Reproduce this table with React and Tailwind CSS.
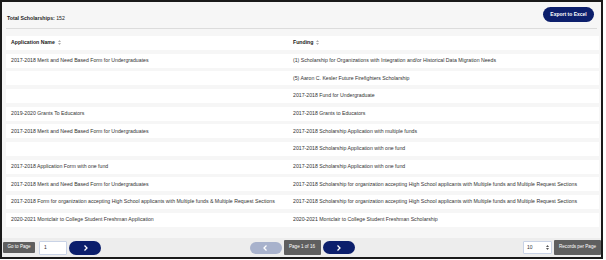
import React from "react";

const rows = [
  ["2017-2018 Merit and Need Based Form for Undergraduates", "(1) Scholarship for Organizations with Integration and/or Historical Data Migration Needs"],
  ["", "(5) Aaron C. Kesler Future Firefighters Scholarship"],
  ["", "2017-2018 Fund for Undergraduate"],
  ["2019-2020 Grants To Educators", "2017-2018 Grants to Educators"],
  ["2017-2018 Merit and Need Based Form for Undergraduates", "2017-2018 Scholarship Application with multiple funds"],
  ["", "2017-2018 Scholarship Application with one fund"],
  ["2017-2018 Application Form with one fund", "2017-2018 Scholarship Application with one fund"],
  ["2017-2018 Merit and Need Based Form for Undergraduates", "2017-2018 Scholarship for organization accepting High School applicants with Multiple funds and Multiple Request Sections"],
  ["2017-2018 Form for organization accepting High School applicants with Multiple funds & Multiple Request Sections", "2017-2018 Scholarship for organization accepting High School applicants with Multiple funds and Multiple Request Sections"],
  ["2020-2021 Montclair to College Student Freshman Application", "2020-2021 Montclair to College Student Freshman Scholarship"],
];

function SortIcon() {
  return (
    <svg width="3" height="5" viewBox="0 0 6 10" className="ml-[3px] inline-block">
      <path d="M3 0 L6 4 L0 4 Z" fill="#b0b0b0" />
      <path d="M3 10 L6 6 L0 6 Z" fill="#b0b0b0" />
    </svg>
  );
}

function Chevron({ dir }) {
  return (
    <svg width="5" height="6" viewBox="0 0 10 12">
      {dir === "right" ? (
        <path d="M3 1 L8 6 L3 11" stroke="white" strokeWidth="2.6" fill="none" />
      ) : (
        <path d="M7 1 L2 6 L7 11" stroke="white" strokeWidth="2.6" fill="none" />
      )}
    </svg>
  );
}

export default function App() {
  return (
    <div className="w-[606px] h-[260px] bg-white" style={{ fontFamily: '"Liberation Sans", Arial, sans-serif' }}>
      <div className="w-[603px] h-[259px] border-2 border-[#1a1a1a] bg-[#f6f6f6] flex flex-col">
        <div className="flex items-start justify-between pl-[5px] pr-[7px] pt-[5px] h-[20px]">
          <div className="mt-[9px] text-[5.2px] text-[#222] leading-none">
            <span className="font-bold">Total Scholarships:</span> 152
          </div>
          <div className="w-[51px] h-[15px] rounded-full bg-[#0c1f6c] text-white text-[5px] font-bold flex items-center justify-center leading-none">
            Export to Excel
          </div>
        </div>
        <div className="mx-[4px] mt-[6px] border-b border-[#dcdcdc]"></div>
        <div className="ml-[4px] mr-[2px] mt-[7px] flex flex-col gap-[3.67px]">
          <div className="h-[14px] bg-white grid grid-cols-[282px_1fr] items-center text-[5.2px] font-bold text-[#1a1a1a] leading-none">
            <div className="pl-[5px] flex items-center">Application Name<SortIcon /></div>
            <div className="pl-[5px] flex items-center">Funding<SortIcon /></div>
          </div>
          {rows.map((r, i) => (
            <div key={i} className="h-[14px] bg-white grid grid-cols-[282px_1fr] items-center text-[5.2px] text-[#333] leading-none">
              <div className="pl-[5px] whitespace-nowrap">{r[0]}</div>
              <div className="pl-[5px] whitespace-nowrap">{r[1]}</div>
            </div>
          ))}
        </div>
        <div className="mt-auto h-[19px] bg-[#ededed] grid grid-cols-[1fr_auto_1fr] items-center pl-[1px]">
          <div className="flex items-center justify-self-start">
            <div className="h-[11px] w-[32px] bg-[#5f5f5f] text-white text-[4.6px] flex items-center justify-center rounded-[1px]">Go to Page</div>
            <div className="ml-[4px] h-[14px] w-[28px] bg-white border border-[#c9d3e6] rounded-[1px] text-[5px] text-[#333] flex items-center pl-[4px]">1</div>
            <div className="ml-[2px] h-[14px] w-[32px] rounded-full bg-[#0c1f6c] flex items-center justify-center"><Chevron dir="right" /></div>
          </div>
          <div className="flex items-center">
            <div className="h-[12px] w-[32px] rounded-full bg-[#a8b2cc] flex items-center justify-center"><Chevron dir="left" /></div>
            <div className="ml-[2px] h-[15px] w-[37px] bg-[#5f5f5f] text-white text-[4.6px] flex items-center justify-center rounded-[1px]">Page 1 of 16</div>
            <div className="ml-[2px] h-[13px] w-[32px] rounded-full bg-[#0c1f6c] flex items-center justify-center"><Chevron dir="right" /></div>
          </div>
          <div className="flex items-center justify-self-end">
            <div className="h-[13px] w-[29px] bg-white border border-[#c9d3e6] rounded-[1px] text-[5px] text-[#333] flex items-center justify-between pl-[3px] pr-[2px]">
              <span>10</span>
              <svg width="3" height="5" viewBox="0 0 6 10"><path d="M3 0 L6 4 L0 4 Z" fill="#555" /><path d="M3 10 L6 6 L0 6 Z" fill="#555" /></svg>
            </div>
            <div className="ml-[2px] h-[15px] w-[47px] bg-[#5f5f5f] text-white text-[4.6px] flex items-center justify-center rounded-[1px]">Records per Page</div>
          </div>
        </div>
      </div>
    </div>
  );
}
